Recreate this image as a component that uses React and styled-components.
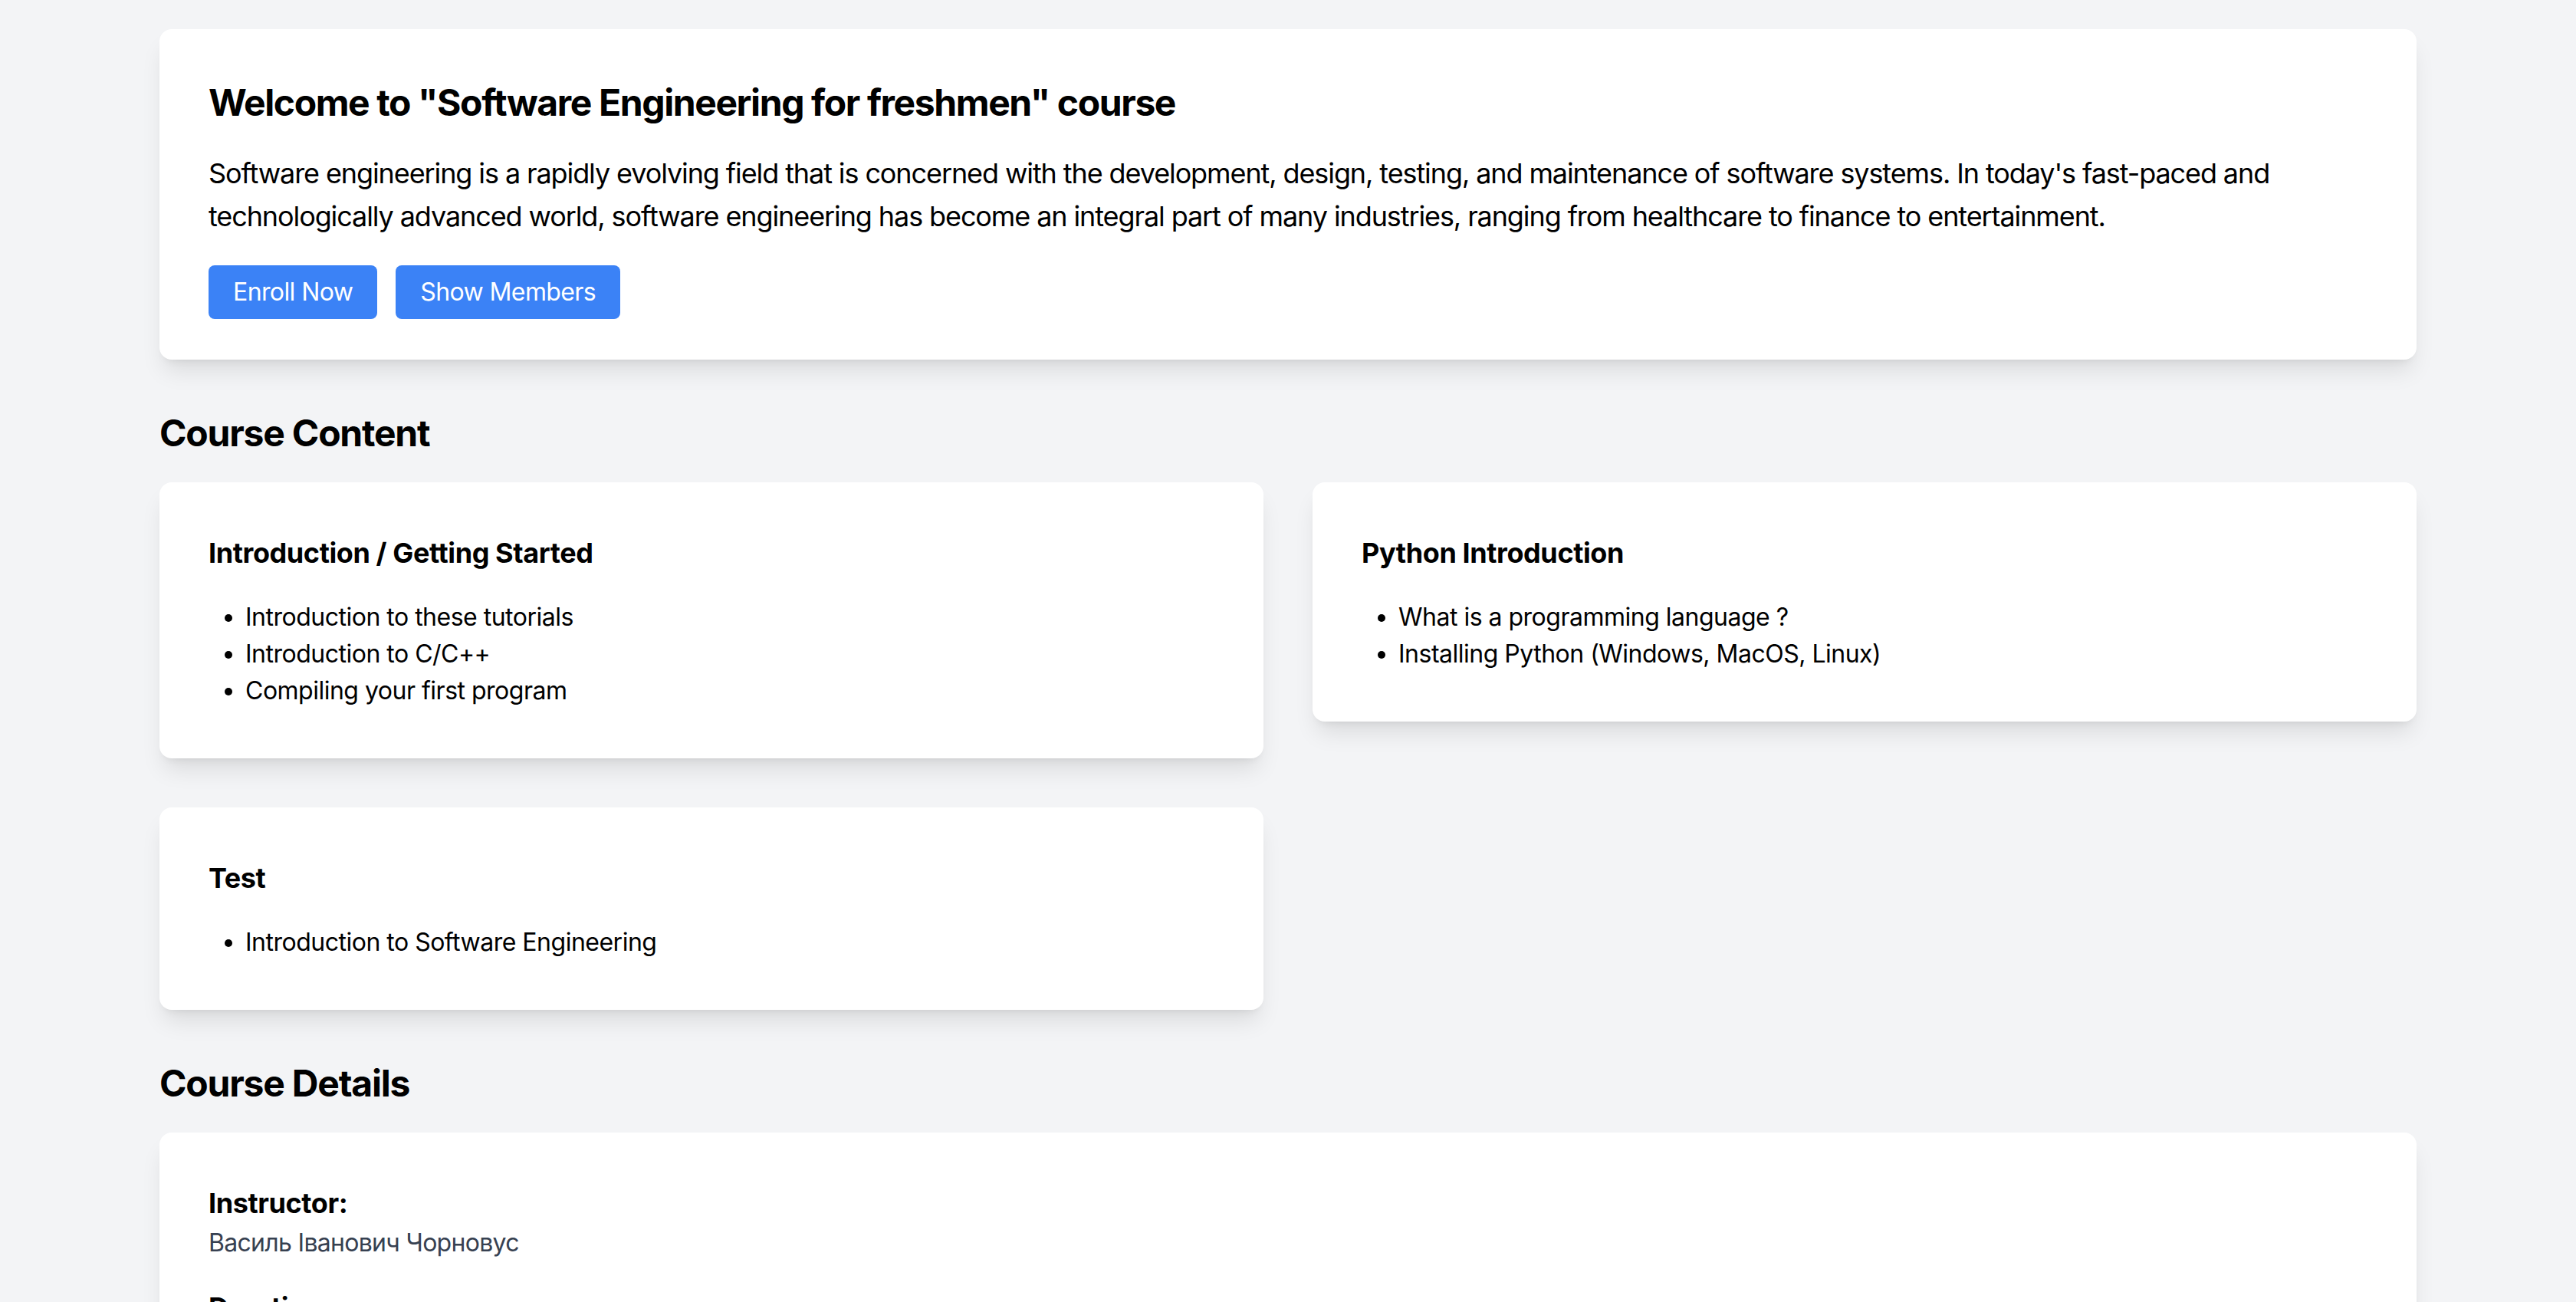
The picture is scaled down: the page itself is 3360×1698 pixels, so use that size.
import React from "react";
import styled, { createGlobalStyle } from "styled-components";

const GlobalStyle = createGlobalStyle`
  body {
    margin: 0;
    background-color: #f3f4f6;
    font-family: Inter, "Noto Sans", "Noto Sans CJK SC", sans-serif;
    color: #000;
  }
`;

const modules = [
  {
    title: "Introduction / Getting Started",
    lessons: [
      "Introduction to these tutorials",
      "Introduction to C/C++",
      "Compiling your first program",
    ],
  },
  {
    title: "Python Introduction",
    lessons: [
      "What is a programming language ?",
      "Installing Python (Windows, MacOS, Linux)",
    ],
  },
  {
    title: "Test",
    lessons: ["Introduction to Software Engineering"],
  },
];

const details = [
  { label: "Instructor:", value: "Василь Іванович Чорновус" },
  { label: "Duration:", value: "16 weeks" },
];

function App() {
  return (
    <>
      <GlobalStyle />
      <Page>
        <HeroCard>
          <Title>Welcome to "Software Engineering for freshmen" course</Title>
          <Intro>
            Software engineering is a rapidly evolving field that is concerned
            with the development, design, testing, and maintenance of software
            systems. In today's fast-paced and technologically advanced world,
            software engineering has become an integral part of many
            industries, ranging from healthcare to finance to entertainment.
          </Intro>
          <ButtonRow>
            <Button>Enroll Now</Button>
            <Button>Show Members</Button>
          </ButtonRow>
        </HeroCard>

        <SectionTitle>Course Content</SectionTitle>
        <ContentGrid>
          {modules.map((m) => (
            <Card key={m.title}>
              <CardTitle>{m.title}</CardTitle>
              <BulletList>
                {m.lessons.map((l) => (
                  <li key={l}>{l}</li>
                ))}
              </BulletList>
            </Card>
          ))}
        </ContentGrid>

        <SectionTitle>Course Details</SectionTitle>
        <Card>
          {details.map((d) => (
            <DetailBlock key={d.label}>
              <CardTitle as="h4">{d.label}</CardTitle>
              <DetailValue>{d.value}</DetailValue>
            </DetailBlock>
          ))}
        </Card>
      </Page>
    </>
  );
}

const Page = styled.div`
  max-width: 3072px;
  margin: 0 auto;
  padding: 38px 64px 64px;
  box-sizing: border-box;
`;

const Card = styled.div`
  background-color: #fff;
  border-radius: 16px;
  padding: 64px;
  box-shadow: 0 20px 30px -6px rgba(0, 0, 0, 0.1),
    0 8px 12px -8px rgba(0, 0, 0, 0.1);
`;

const HeroCard = styled(Card)`
  padding-bottom: 53px;
  margin-bottom: 64px;
`;

const Title = styled.h1`
  margin: 0 0 32px;
  font-size: 48px;
  line-height: 64px;
  font-weight: 700;
  letter-spacing: -1.4px;
`;

const Intro = styled.p`
  margin: 0 0 36px;
  font-size: 36px;
  line-height: 56px;
  letter-spacing: -1.1px;
`;

const ButtonRow = styled.div`
  display: flex;
  gap: 24px;
`;

const Button = styled.button`
  height: 70px;
  padding: 0 32px;
  border: none;
  border-radius: 8px;
  background-color: #3b82f6;
  color: #fff;
  font-family: inherit;
  font-size: 32px;
  line-height: 48px;
  letter-spacing: -0.6px;
  cursor: pointer;
  &:hover {
    background-color: #2563eb;
  }
`;

const SectionTitle = styled.h2`
  margin: 0 0 32px;
  font-size: 48px;
  line-height: 64px;
  font-weight: 700;
  letter-spacing: -1.2px;
`;

const ContentGrid = styled.div`
  display: grid;
  grid-template-columns: 1fr 1fr;
  gap: 64px;
  align-items: start;
  margin-bottom: 64px;
`;

const CardTitle = styled.h3`
  margin: 0 0 32px;
  font-size: 36px;
  line-height: 56px;
  font-weight: 700;
  letter-spacing: -0.4px;
`;

const BulletList = styled.ul`
  margin: 0;
  padding-left: 48px;
  list-style: disc;
  font-size: 32px;
  line-height: 48px;
  letter-spacing: -0.5px;
`;

const DetailBlock = styled.div`
  margin-bottom: 32px;
  ${CardTitle} {
    margin-bottom: 0;
  }
`;

const DetailValue = styled.p`
  margin: 0;
  font-size: 32px;
  line-height: 48px;
  letter-spacing: -0.7px;
  color: #374151;
`;

export default App;
